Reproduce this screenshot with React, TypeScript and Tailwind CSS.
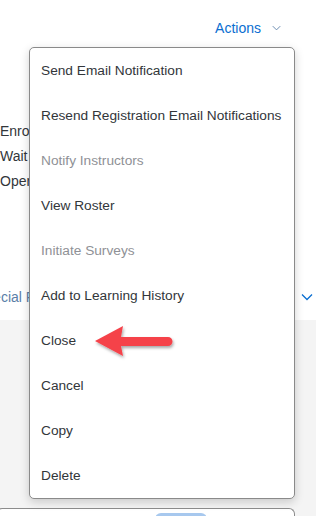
import React from "react";

const items: { label: string; disabled?: boolean }[] = [
  { label: "Send Email Notification" },
  { label: "Resend Registration Email Notifications" },
  { label: "Notify Instructors", disabled: true },
  { label: "View Roster" },
  { label: "Initiate Surveys", disabled: true },
  { label: "Add to Learning History" },
  { label: "Close" },
  { label: "Cancel" },
  { label: "Copy" },
  { label: "Delete" },
];

const Chevron = ({ className }: { className?: string }) => (
  <svg viewBox="0 0 12 8" className={className} fill="none" stroke="currentColor" strokeWidth="1.3">
    <path d="M1 1.5 L6 6.5 L11 1.5" />
  </svg>
);

export default function App() {
  return (
    <div className="relative w-[316px] h-[516px] overflow-hidden bg-white font-['Liberation_Sans',Arial,sans-serif]">
      {/* page behind the menu */}
      <div className="flex flex-col h-full">
        <div className="flex items-center justify-end h-[56px] pr-[35px] gap-[11px]">
          <span className="text-[14px] text-[#0a6ed1]">Actions</span>
          <Chevron className="w-[9px] h-[6px] text-[#6a8bb0]" />
        </div>
        <div className="w-[29px] overflow-hidden flex flex-col gap-[7px] pt-[66px] text-[14px] leading-[18px] text-[#32363a] whitespace-nowrap">
          <span>Enro</span>
          <span>Wait</span>
          <span>Oper</span>
        </div>
        <div className="flex items-center justify-between h-[46px] mt-[84px] pr-[3px]">
          <div className="w-[29px] overflow-hidden whitespace-nowrap">
            <span className="block -ml-[24px] text-[14px] text-[#5a7ea8]">Special F</span>
          </div>
          <Chevron className="w-[12px] h-[8px] text-[#0a6ed1]" />
        </div>
        <div className="flex-1 bg-[#f4f4f4] flex flex-col justify-end">
          <div className="h-[8px] -ml-[4px] mr-[21px] rounded-t-[6px] border border-b-0 border-[#8c8c8c] bg-white flex justify-center pt-[4px] pl-[70px]">
            <div className="w-[52px] h-[6px] rounded-t-[6px] bg-[#a7c8ee]" />
          </div>
        </div>
      </div>

      {/* dropdown menu */}
      <div className="absolute left-[29px] top-[47px] w-[266px] rounded-[5px] border border-[#8a8a8a] bg-white shadow-[0_3px_10px_rgba(0,0,0,0.18)]">
        {items.map((it) => (
          <div
            key={it.label}
            className={`flex items-center h-[45px] pl-[11px] pt-[2px] text-[13.7px] whitespace-nowrap ${
              it.disabled ? "text-[#8f9196]" : "text-[#32363a]"
            }`}
          >
            {it.label}
          </div>
        ))}
      </div>

      {/* red arrow pointing at Close */}
      <svg
        className="absolute left-[90px] top-[320px] w-[90px] h-[44px]"
        viewBox="0 0 90 44"
      >
        <defs>
          <filter id="sh" x="-20%" y="-30%" width="140%" height="170%">
            <feDropShadow dx="1" dy="2" stdDeviation="1.5" floodColor="#000" floodOpacity="0.35" />
          </filter>
        </defs>
        <g filter="url(#sh)" fill="#f5424a">
          <path d="M5 21 L33 6 L31 17 L78 17 A4.5 4.5 0 0 1 78 26 L31 26 L33 36 Z" />
        </g>
      </svg>
    </div>
  );
}
